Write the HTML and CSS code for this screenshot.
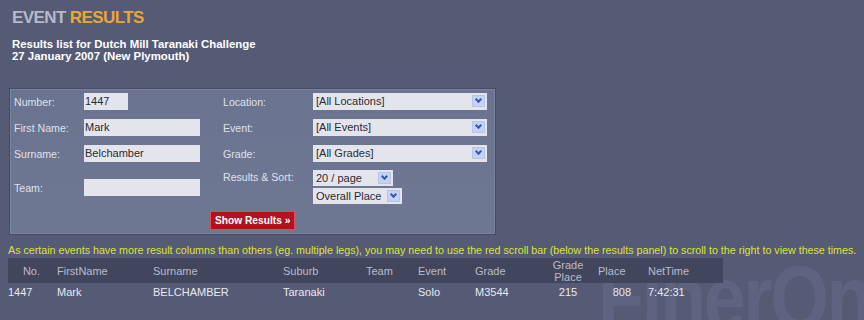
FILE: index.html
```html
<!DOCTYPE html>
<html lang="en">
<head>
    <meta charset="UTF-8">
    <title>Event Results</title>
    <link rel="stylesheet" href="styles.css">
</head>
<body>
    <div class="watermark">FinerOn</div>

    <div class="page">
        <h1 class="title"><span class="t-event">EVENT</span> <span class="t-results">RESULTS</span></h1>

        <div class="subtitle">
            Results list for Dutch Mill Taranaki Challenge<br>
            27 January 2007 (New Plymouth)
        </div>

        <!-- search panel -->
        <form class="panel">
            <div class="fields">
                <div class="col-left">
                    <div class="row"><label>Number:</label><span class="input short">1447</span></div>
                    <div class="row"><label>First Name:</label><span class="input">Mark</span></div>
                    <div class="row"><label>Surname:</label><span class="input">Belchamber</span></div>
                    <div class="row row-team"><label>Team:</label><span class="input"></span></div>
                </div>
                <div class="col-right">
                    <div class="row"><label>Location:</label><span class="select wide">[All Locations]<i class="arrow"></i></span></div>
                    <div class="row"><label>Event:</label><span class="select wide">[All Events]<i class="arrow"></i></span></div>
                    <div class="row"><label>Grade:</label><span class="select wide">[All Grades]<i class="arrow"></i></span></div>
                    <div class="row row-sort">
                        <label>Results &amp; Sort:</label>
                        <div class="sort-stack">
                            <span class="select s-page">20 / page<i class="arrow"></i></span>
                            <span class="select s-order">Overall Place<i class="arrow"></i></span>
                        </div>
                    </div>
                </div>
            </div>
            <div class="actions">
                <span class="btn-red">Show Results &raquo;</span>
            </div>
        </form>

        <p class="note">As certain events have more result columns than others (eg. multiple legs), you may need to use the red scroll bar (below the results panel) to scroll to the right to view these times.</p>

        <table class="results">
            <colgroup>
                <col style="width: 49px">
                <col style="width: 96px">
                <col style="width: 130px">
                <col style="width: 83px">
                <col style="width: 52px">
                <col style="width: 57px">
                <col style="width: 65px">
                <col style="width: 56px">
                <col style="width: 44px">
                <col style="width: 83px">
            </colgroup>
            <thead>
                <tr>
                    <th class="c-no">No.</th>
                    <th>FirstName</th>
                    <th>Surname</th>
                    <th>Suburb</th>
                    <th>Team</th>
                    <th>Event</th>
                    <th>Grade</th>
                    <th class="c-gp">Grade<br>Place</th>
                    <th class="c-place">Place</th>
                    <th class="c-time">NetTime</th>
                </tr>
            </thead>
            <tbody>
                <tr>
                    <td>1447</td>
                    <td>Mark</td>
                    <td>BELCHAMBER</td>
                    <td>Taranaki</td>
                    <td></td>
                    <td>Solo</td>
                    <td>M3544</td>
                    <td class="c-gp">215</td>
                    <td class="c-place">808</td>
                    <td class="c-time">7:42:31</td>
                </tr>
            </tbody>
        </table>
    </div>
</body>
</html>
```

FILE: styles.css
```css
body {
    margin: 0;
    background: #565b75;
    font-family: 'Liberation Sans', Arial, sans-serif;
    font-size: 11px;
    color: #e4e6ee;
    overflow: hidden;
    height: 320px;
    position: relative;
}

.page {
    position: relative;
    padding: 8px 8px 0 8px;
}

.watermark {
    position: absolute;
    left: 598px;
    top: 253px;
    font-family: 'Liberation Sans', sans-serif;
    font-weight: bold;
    font-size: 90px;
    letter-spacing: -3px;
    color: #5d6380;
    line-height: 1;
    transform: scaleX(0.84);
    transform-origin: left top;
}

.title {
    margin: 0 0 0 4px;
    font-size: 17px;
    font-weight: bold;
    letter-spacing: -0.6px;
    line-height: 20px;
}

.t-event {
    color: #b5b9c9;
}

.t-results {
    color: #e9a53c;
}

.subtitle {
    margin: 10px 0 0 4px;
    font-weight: bold;
    font-size: 11.4px;
    line-height: 12px;
    color: #ffffff;
}

/* search panel */
.panel {
    margin: 26px 0 0 1px;
    width: 487px;
    height: 147px;
    box-sizing: border-box;
    background: linear-gradient(#6a738f, #6e7893);
    border: 1px solid #474c66;
    box-shadow: inset 0 0 0 1px #7a839d;
    padding: 4px 0 0 4px;
    color: #dfe2ec;
}

.fields {
    display: flex;
}

.col-left {
    width: 209px;
}

.col-right {
    width: 270px;
}

.row {
    display: flex;
    align-items: center;
    height: 17px;
    margin-bottom: 9px;
}

.row label {
    width: 70px;
    font-size: 10.6px;
}

.col-right .row label {
    width: 90px;
}

.row-team {
    margin-top: 17px;
}

.row-sort {
    align-items: flex-start;
    height: auto;
    margin-top: -1px;
}

.row-sort label {
    padding-top: 1px;
}

.input {
    width: 116px;
    height: 17px;
    box-sizing: border-box;
    background: #e4e5ec;
    color: #2a2a34;
    padding: 2px 0 0 1px;
    line-height: 13px;
}

.input.short {
    width: 44px;
}

.select {
    position: relative;
    height: 17px;
    box-sizing: border-box;
    background: #e4e5ec;
    color: #2a2a34;
    padding: 2px 0 0 3px;
    line-height: 13px;
}

.select.wide {
    width: 174px;
}

.s-page {
    display: block;
    width: 80px;
    height: 16px;
}

.s-order {
    display: block;
    width: 89px;
    height: 16px;
    margin-top: 2px;
}

.arrow {
    position: absolute;
    right: 2px;
    top: 2px;
    width: 13px;
    height: 12px;
    background: #c4d2f4;
    border: 1px solid #b5c4ea;
    box-sizing: border-box;
}

.arrow::after {
    content: "";
    position: absolute;
    left: 3px;
    top: 1px;
    width: 3px;
    height: 3px;
    border-right: 2px solid #3a55b0;
    border-bottom: 2px solid #3a55b0;
    transform: rotate(45deg);
}

.actions {
    padding-left: 196px;
    margin-top: -2px;
}

.btn-red {
    display: inline-block;
    background: #b2121f;
    border: 1px solid #d8505a;
    color: #ffffff;
    font-weight: bold;
    font-size: 10.2px;
    line-height: 17px;
    padding: 0 4px;
}

.note {
    margin: 9px 0 0 0;
    color: #dce13a;
    font-size: 10.7px;
    line-height: 13px;
    white-space: nowrap;
}

/* results table */
.results {
    border-collapse: collapse;
    table-layout: fixed;
    width: 715px;
    margin-top: 1px;
}

.results th,
.results td {
    box-sizing: border-box;
    padding: 0;
    text-align: left;
    white-space: nowrap;
}

.results th {
    background: #42465d;
    color: #b8bccc;
    font-weight: normal;
    height: 25px;
    line-height: 12px;
}

.results td {
    color: #e8e9f0;
    height: 17px;
}

.results th.c-no {
    text-align: right;
    padding-right: 17px;
}

.results .c-gp {
    text-align: center;
}

.results th.c-place {
    padding-left: 2px;
}

.results td.c-place {
    text-align: right;
    padding-right: 9px;
}

.results .c-time {
    padding-left: 8px;
}
```
